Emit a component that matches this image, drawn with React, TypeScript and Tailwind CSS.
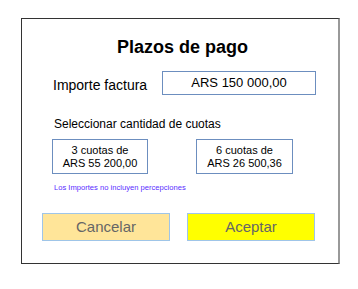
import React from 'react';

const cuotas = [
    { n: 3, monto: 'ARS 55 200,00', w: 'w-[96px]' },
    { n: 6, monto: 'ARS 26 500,36', w: 'w-[97px]' },
];

const App: React.FC = () => {
    return (
        <div className="w-[358px] h-[289px] bg-white pt-[18px] pl-[21px] font-['Liberation_Sans',Arial,sans-serif] text-black">
            <div className="w-[319px] h-[246px] border border-[#333] border-r-2 border-r-[#999] flex flex-col">
                <h1 className="mt-[17px] pl-[5px] text-center text-[18px] leading-[22px] font-bold">Plazos de pago</h1>

                <div className="mt-[13px] pl-[31px] flex items-center">
                    <span className="w-[109px] text-[14px] leading-[16px] pt-[4px]">Importe factura</span>
                    <div className="w-[154px] h-[24px] border border-[#6c8ebf] flex items-center justify-center text-[13px] leading-[16px]">
                        ARS 150 000,00
                    </div>
                </div>

                <p className="mt-[22px] pl-[32px] text-[12px] leading-[14px]">Seleccionar cantidad de cuotas</p>

                <div className="mt-[8px] pl-[30px] flex gap-[48px]">
                    {cuotas.map((c) => (
                        <button
                            key={c.n}
                            className={`${c.w} h-[35px] border border-[#6c8ebf] flex flex-col items-center justify-center text-[11px] leading-[12.5px] bg-white`}
                        >
                            <span>{c.n} cuotas de</span>
                            <span>{c.monto}</span>
                        </button>
                    ))}
                </div>

                <p className="mt-[9px] pl-[32px] text-[7.6px] leading-[9px] text-[#5a2eff]">Los Importes no incluyen percepciones</p>

                <div className="mt-[21px] pl-[20px] flex gap-[17px]">
                    <button className="w-[128px] h-[28px] bg-[#ffe599] border border-[#9fc5e8] text-[15px] text-[#666] flex items-center justify-center">
                        Cancelar
                    </button>
                    <button className="w-[128px] h-[28px] bg-[#ffff00] border border-[#9fc5e8] text-[15px] text-[#666] flex items-center justify-center">
                        Aceptar
                    </button>
                </div>
            </div>
        </div>
    );
};

export default App;
